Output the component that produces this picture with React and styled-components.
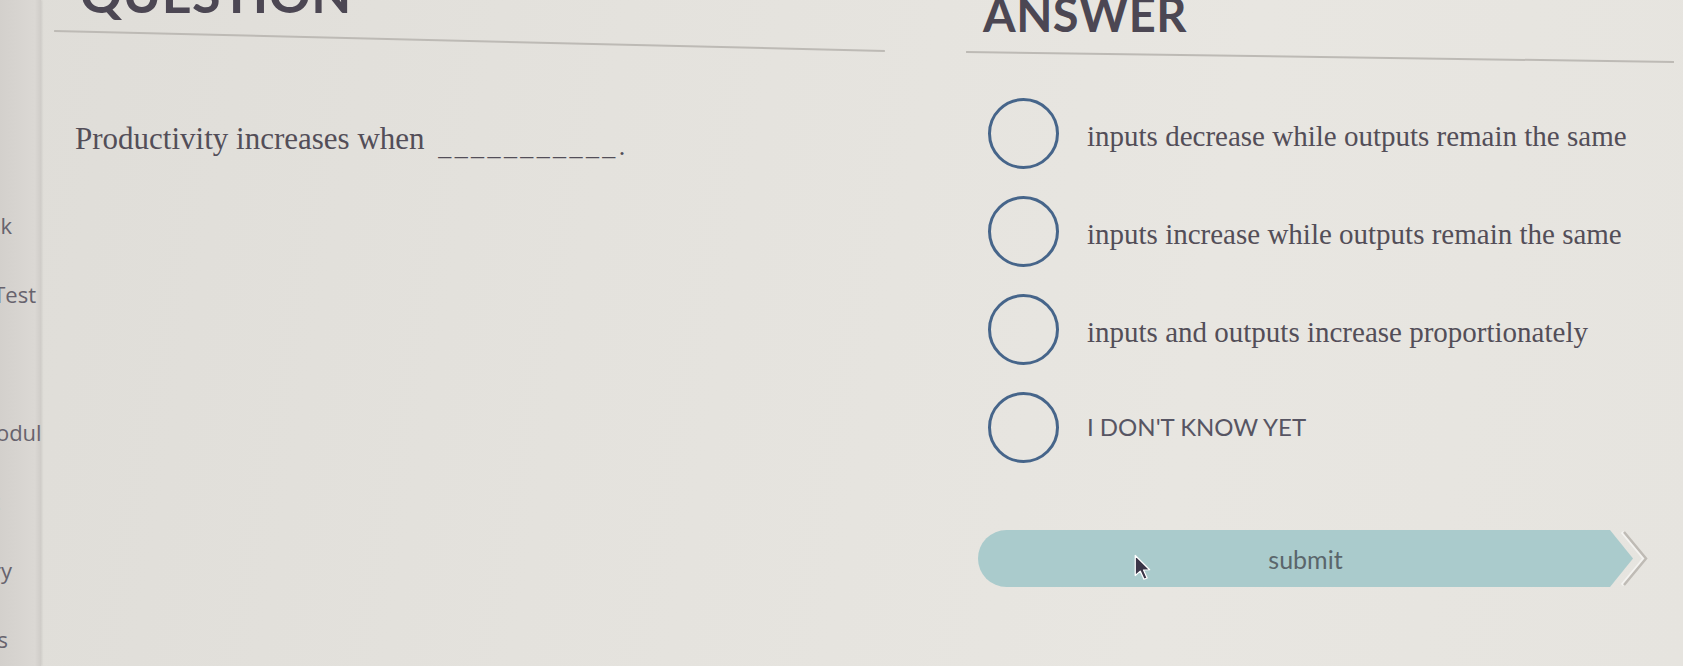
import React from "react";
import styled, { createGlobalStyle } from "styled-components";

const GlobalStyle = createGlobalStyle`
  html, body {
    margin: 0;
    padding: 0;
  }
  body {
    background: #e4e2dd;
    font-family: "Lato", "Liberation Sans", sans-serif;
  }
  * {
    box-sizing: border-box;
  }
`;

const Page = styled.div`
  display: flex;
  width: 1683px;
  height: 666px;
  overflow: hidden;
  background: linear-gradient(
    100deg,
    #dfddd8 0%,
    #e4e2dd 35%,
    #e8e6e1 70%,
    #e6e4df 100%
  );
`;

const Sidebar = styled.nav`
  width: 41px;
  flex-shrink: 0;
  overflow: hidden;
  padding-top: 52px;
  background: linear-gradient(to right, #d3d0cc, #dbd8d4 85%, #cfccc8 100%);
  box-shadow: 1px 0 2px rgba(0, 0, 0, 0.08);
  position: relative;
  z-index: 1;
`;

const NavItem = styled.div`
  height: 69px;
  display: flex;
  align-items: center;
  justify-content: flex-end;
  margin-right: ${(p) => 41 - p.$end}px;
`;

const NavLabel = styled.span`
  flex-shrink: 0;
  white-space: nowrap;
  font-family: "Open Sans", "Liberation Sans", sans-serif;
  font-size: 22px;
  color: #67636d;
`;

const Main = styled.main`
  flex: 1;
  display: flex;
  gap: 81px;
  padding-left: 13px;
`;

const Column = styled.section`
  width: ${(p) => p.$width}px;
  flex-shrink: 0;
  display: flex;
  flex-direction: column;
`;

const Heading = styled.h2`
  margin: ${(p) => p.$top}px 0 0;
  padding-left: ${(p) => p.$indent}px;
  font-family: "Lato", "Liberation Sans", sans-serif;
  font-weight: 700;
  font-size: ${(p) => p.$size}px;
  line-height: 1;
  letter-spacing: 0.5px;
  color: #4c4753;
`;

const Rule = styled.hr`
  margin: ${(p) => p.$gap}px 0 0;
  border: 0;
  height: 2px;
  background: #bdbab5;
  transform: rotate(${(p) => p.$tilt}deg);
`;

const QuestionText = styled.p`
  margin: 79px 0 0;
  padding-left: 21px;
  font-family: "Liberation Serif", serif;
  font-size: 31px;
  line-height: 36px;
  color: #534e58;
`;

const Blank = styled.span`
  letter-spacing: 3.4px;
  font-size: 26px;
  vertical-align: -6px;
  margin-left: 6px;
`;

const OptionList = styled.ul`
  list-style: none;
  margin: 40px 0 0;
  padding: 0 0 0 22px;
  display: flex;
  flex-direction: column;
  gap: 27px;
`;

const Option = styled.li`
  display: flex;
  align-items: center;
  gap: 28px;
  height: 71px;
`;

const Radio = styled.span`
  width: 71px;
  height: 71px;
  flex-shrink: 0;
  border-radius: 50%;
  border: 3px solid #46658a;
`;

const OptionLabel = styled.span`
  font-family: ${(p) =>
    p.$sans
      ? `"Lato", "Liberation Sans", sans-serif`
      : `"Liberation Serif", serif`};
  font-size: ${(p) => (p.$sans ? 24 : 29)}px;
  color: ${(p) => (p.$sans ? "#575563" : "#534e58")};
  margin-top: ${(p) => (p.$sans ? -2 : 6)}px;
`;

const SubmitRow = styled.div`
  display: flex;
  align-items: center;
  margin-top: 67px;
  padding-left: 12px;
`;

const SubmitButton = styled.button`
  position: relative;
  width: 655px;
  height: 57px;
  border: none;
  padding: 0;
  border-radius: 28.5px 0 0 28.5px;
  clip-path: polygon(
    0 0,
    calc(100% - 23px) 0,
    100% 50%,
    calc(100% - 23px) 100%,
    0 100%
  );
  background: #aacbcc;
  font-family: "Lato", "Liberation Sans", sans-serif;
  font-size: 25px;
  color: #5a666b;
  cursor: pointer;
`;

const Cursor = styled.svg`
  position: absolute;
  left: 156px;
  top: 24px;
`;

const Chevron = styled.svg`
  margin-left: -13px;
  flex-shrink: 0;
`;

const navItems = [
  { label: "Home", end: -4 },
  { label: "Lessons", end: -4 },
  { label: "Notebook", end: 12 },
  { label: "Practice Test", end: 36 },
  { label: "Quiz", end: -4 },
  { label: "Module", end: 54 },
  { label: "Unit", end: -4 },
  { label: "Glossary", end: 12 },
  { label: "Resources", end: 8 },
];

const options = [
  { text: "inputs decrease while outputs remain the same" },
  { text: "inputs increase while outputs remain the same" },
  { text: "inputs and outputs increase proportionately" },
  { text: "I DON'T KNOW YET", sans: true },
];

function App() {
  return (
    <>
      <GlobalStyle />
      <Page>
        <Sidebar>
          {navItems.map((n) => (
            <NavItem key={n.label} $end={n.end}>
              <NavLabel>{n.label}</NavLabel>
            </NavItem>
          ))}
        </Sidebar>
        <Main>
          <Column $width={831}>
            <Heading $top={-33} $indent={26} $size={52}>
              QUESTION
            </Heading>
            <Rule $gap={21} $tilt={1.38} />
            <QuestionText>
              Productivity increases when <Blank>___________.</Blank>
            </QuestionText>
          </Column>
          <Column $width={708}>
            <Heading $top={-9} $indent={17} $size={47}>
              ANSWER
            </Heading>
            <Rule $gap={18} $tilt={0.8} />
            <OptionList>
              {options.map((o) => (
                <Option key={o.text}>
                  <Radio />
                  <OptionLabel $sans={o.sans}>{o.text}</OptionLabel>
                </Option>
              ))}
            </OptionList>
            <SubmitRow>
              <SubmitButton>
                submit
                <Cursor width="20" height="28" viewBox="0 0 16 22">
                  <path
                    d="M1 1 L1 17 L5 13.5 L8 20 L10.5 19 L7.6 12.6 L12.5 12.4 Z"
                    fill="#3b3648"
                    stroke="#ffffff"
                    strokeWidth="1"
                    strokeLinejoin="round"
                  />
                </Cursor>
              </SubmitButton>
              <Chevron width="30" height="57" viewBox="0 0 30 57">
                <polyline
                  points="4,2 26,28.5 4,55"
                  fill="none"
                  stroke="#f4f3f0"
                  strokeWidth="3"
                  transform="translate(-2 0)"
                />
                <polyline
                  points="4,2 26,28.5 4,55"
                  fill="none"
                  stroke="#bfbbb5"
                  strokeWidth="2.5"
                />
              </Chevron>
            </SubmitRow>
          </Column>
        </Main>
      </Page>
    </>
  );
}

export default App;
